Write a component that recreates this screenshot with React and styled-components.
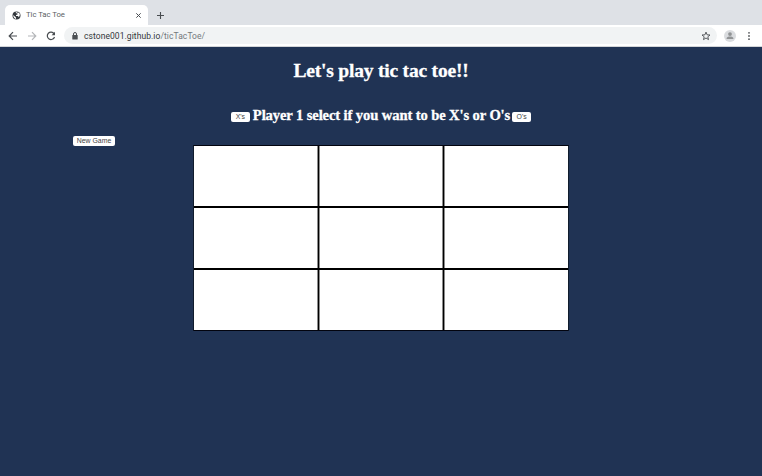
import React from "react";
import styled, { createGlobalStyle } from "styled-components";

const GlobalStyle = createGlobalStyle`
  * { box-sizing: border-box; }
  html, body { margin: 0; padding: 0; overflow: hidden; }
  button { cursor: pointer; }
`;

const Window = styled.div`
  width: 762px;
  height: 476px;
  display: flex;
  flex-direction: column;
  background: #203354;
  font-family: Roboto, "Liberation Sans", sans-serif;
`;

const TabStrip = styled.div`
  height: 25px;
  padding: 5px 0 0 5px;
  display: flex;
  background: #dee1e6;
`;

const Tab = styled.div`
  width: 143px;
  height: 20px;
  padding: 0 6px 0 7px;
  display: flex;
  align-items: center;
  background: #fff;
  border-radius: 5px 5px 0 0;
`;

const TabTitle = styled.span`
  flex: 1;
  margin-left: 5px;
  font-size: 7.8px;
  line-height: 10px;
  letter-spacing: -0.06px;
  color: #5c5f64;
`;

const NewTab = styled.div`
  display: flex;
  align-items: center;
  height: 20px;
  margin-left: 8px;
`;

const Toolbar = styled.div`
  height: 22px;
  padding: 0 8px 0 7px;
  display: flex;
  align-items: center;
  background: #fff;
  border-bottom: 1px solid #d3d5d8;
`;

const NavIcons = styled.div`
  width: 57px;
  display: flex;
  gap: 7px;
`;

const AddressBar = styled.div`
  width: 653px;
  height: 17px;
  padding: 0 6px 0 7px;
  display: flex;
  align-items: center;
  background: #f1f3f4;
  border-radius: 9px;
`;

const Url = styled.span`
  flex: 1;
  margin-left: 5px;
  font-size: 8.5px;
  line-height: 12px;
  letter-spacing: 0.07px;
  color: #34373b;
`;

const UrlPath = styled.span`
  color: #74787d;
`;

const ProfileActions = styled.div`
  display: flex;
  align-items: center;
  gap: 8px;
  margin-left: 7px;
`;

const Icon = styled.svg`
  display: block;
  flex: none;
  width: ${(p) => p.$size}px;
  height: ${(p) => p.$size}px;
  fill: none;
  stroke: ${(p) => p.$color || "#484c50"};
  stroke-width: ${(p) => p.$weight || 1.2};
`;

const Page = styled.main`
  flex: 1;
  padding-top: 12px;
  color: #fff;
  font-family: "Liberation Serif", serif;
`;

const Title = styled.h1`
  margin: 0;
  font-size: 19.5px;
  line-height: 24px;
  font-weight: 700;
  letter-spacing: -0.2px;
  -webkit-text-stroke: 0.3px #fff;
  text-align: center;
`;

const PlayerPrompt = styled.div`
  height: 20px;
  margin-top: 22px;
  display: flex;
  justify-content: center;
  align-items: flex-start;
  gap: 3px;
`;

const PromptText = styled.h2`
  margin: 0 -1px 0 0;
  font-size: 14.6px;
  line-height: 20px;
  font-weight: 700;
  letter-spacing: -0.11px;
  -webkit-text-stroke: 0.3px #fff;
  white-space: nowrap;
`;

const SmallButton = styled.button`
  flex: none;
  width: ${(p) => p.$width}px;
  height: 10px;
  margin: ${(p) => p.$top || 0}px 0 0;
  padding: 0;
  border: 0;
  border-radius: 2px;
  background: #fff;
  color: #444;
  font: 6.9px/10px "Liberation Sans", sans-serif;
  text-align: center;
  white-space: nowrap;
`;

const Game = styled.section`
  margin-top: 11px;
  padding-left: 73px;
  display: flex;
  align-items: flex-start;
`;

const Board = styled.div`
  width: 376px;
  height: 186px;
  margin: 9px 0 0 78px;
  border: 1px solid;
  border-color: #02040f #101c2c #02040f #101c2c;
  display: grid;
  grid-template-columns: repeat(3, 124px);
  grid-template-rows: repeat(3, 60px);
  gap: 2px 1px;
  background: #000;
`;

const Cell = styled.div`
  background: #fff;
  border: 0 solid #8c8c8c;
  border-left-width: ${(p) => (p.$column > 0 ? 1 : 0)}px;
  border-right-width: ${(p) => (p.$column < 2 ? 1 : 0)}px;
`;

function GlobeIcon() {
  return (
    <Icon $size={9} viewBox="0 0 18 18">
      <circle cx="9" cy="9" r="8" fill="#34383d" stroke="none" />
      <path d="M2.5 8 8 13v2.8C4.5 15.2 2.3 12 2.5 8ZM7 4l4 1v2L8 8v2h4l1.5 2.5c3-3 3-7.5-.2-9.7L12 4 9 2 7 4Z" fill="#fff" stroke="none" />
    </Icon>
  );
}

function LockIcon() {
  return (
    <Icon $size={8} $weight={1} viewBox="0 0 8 8">
      <rect x="1.3" y="3" width="5.4" height="4.5" rx=".6" fill="#4b4f53" stroke="none" />
      <path d="M2.5 3.2V2a1.5 1.5 0 0 1 3 0v1.2" />
    </Icon>
  );
}

function ProfileIcon() {
  return (
    <Icon $size={12} viewBox="0 0 12 12">
      <circle cx="6" cy="6" r="6" fill="#dadcdf" stroke="none" />
      <circle cx="6" cy="4.1" r="1.9" fill="#919395" stroke="none" />
      <path d="M2.6 9V8.4C2.6 7.1 4.4 6.6 6 6.6s3.4.5 3.4 1.8V9Z" fill="#919395" stroke="none" />
    </Icon>
  );
}

export default function App() {
  return (
    <>
      <GlobalStyle />
      <Window>
        <TabStrip>
          <Tab>
            <GlobeIcon />
            <TabTitle>Tic Tac Toe</TabTitle>
            <Icon $size={7} $weight={1} viewBox="0 0 7 7"><path d="m1.3 1.3 4.4 4.4m0-4.4L1.3 5.7" /></Icon>
          </Tab>
          <NewTab>
            <Icon $size={9} $weight={1.1} viewBox="0 0 9 9"><path d="M4.5 1v7M1 4.5h7" /></Icon>
          </NewTab>
        </TabStrip>
        <Toolbar>
          <NavIcons>
            <Icon $size={12} viewBox="0 0 12 12"><path d="M10 6H2.5M6 2.2 2.2 6 6 9.8" /></Icon>
            <Icon $size={12} $color="#b4b6b9" viewBox="0 0 12 12"><path d="M2 6h7.5M6 2.2 9.8 6 6 9.8" /></Icon>
            <Icon $size={12} viewBox="0 0 12 12">
              <path d="M9.1 3.8A3.7 3.7 0 1 0 9.5 7" />
              <path d="M10 1.8v3.4H6.6Z" fill="#484c50" stroke="none" />
            </Icon>
          </NavIcons>
          <AddressBar>
            <LockIcon />
            <Url>cstone001.github.io<UrlPath>/ticTacToe/</UrlPath></Url>
            <Icon $size={10} $weight={0.9} viewBox="0 0 10 10">
              <path d="m5 1.1 1.1 2.7 2.9.2-2.2 1.8.7 2.8L5 7 2.5 8.6l.7-2.8L1 4l2.9-.2Z" />
            </Icon>
          </AddressBar>
          <ProfileActions>
            <ProfileIcon />
            <Icon $size={10} viewBox="0 0 10 10">
              <g fill="#55585c" stroke="none">
                <circle cx="5" cy="1.8" r=".9" />
                <circle cx="5" cy="5" r=".9" />
                <circle cx="5" cy="8.2" r=".9" />
              </g>
            </Icon>
          </ProfileActions>
        </Toolbar>
        <Page>
          <Title>Let's play tic tac toe!!</Title>
          <PlayerPrompt>
            <SmallButton $width={19} $top={7}>X's</SmallButton>
            <PromptText>Player 1 select if you want to be X's or O's</PromptText>
            <SmallButton $width={19} $top={7}>O's</SmallButton>
          </PlayerPrompt>
          <Game>
            <SmallButton $width={42}>New Game</SmallButton>
            <Board>
              {Array.from({ length: 9 }, (_, i) => <Cell key={i} $column={i % 3} />)}
            </Board>
          </Game>
        </Page>
      </Window>
    </>
  );
}
